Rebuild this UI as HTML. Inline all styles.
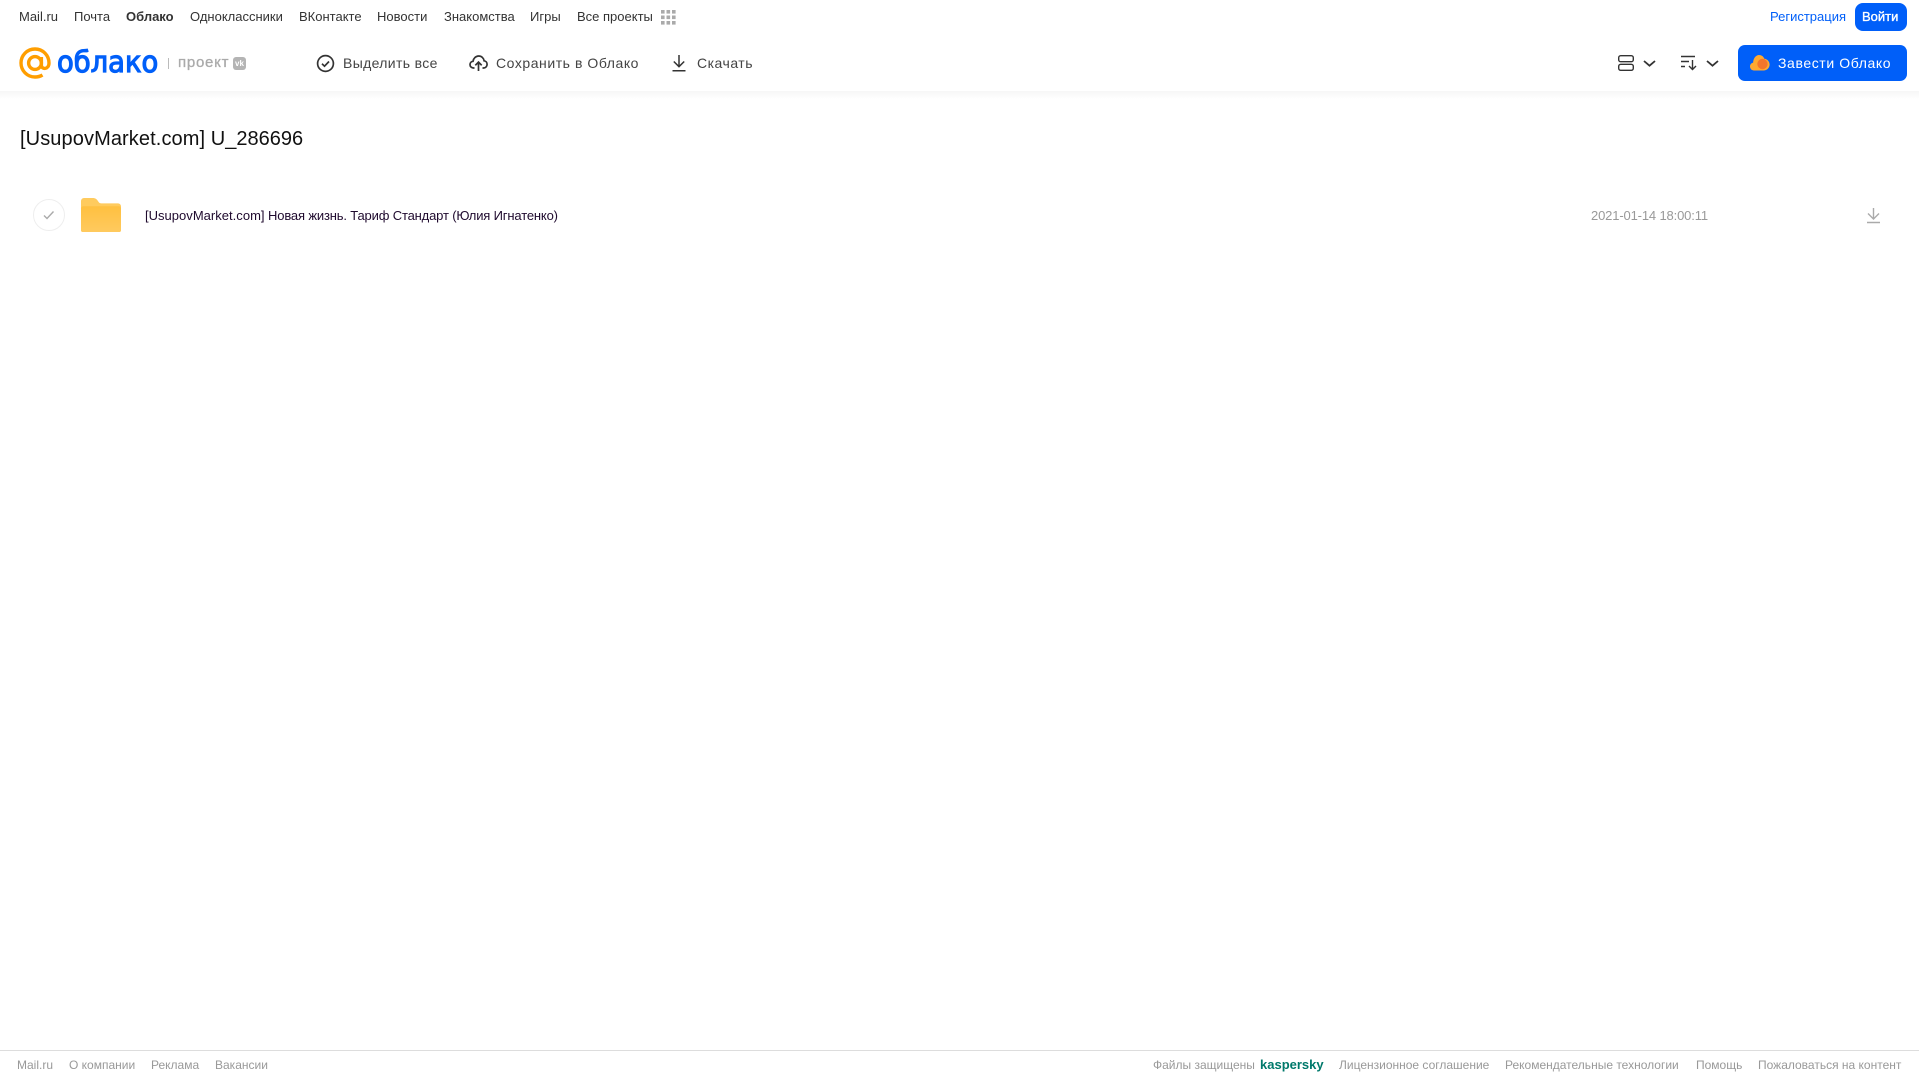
<!DOCTYPE html>
<html lang="ru"><head><meta charset="utf-8"><title>Облако</title>
<style>
html,body{margin:0;padding:0;background:#fff;width:1919px;height:1079px;overflow:hidden;font-family:"Liberation Sans",sans-serif}
.t{position:absolute;white-space:nowrap;line-height:18px}
.n{top:8px;font-size:13px;color:#333}
.b{top:54px;font-size:14px;color:#444;letter-spacing:.35px}
.f{top:1056px;font-size:12px;color:#999}
svg{position:absolute;overflow:visible}
</style></head><body>
<div style="position:absolute;left:0;top:91px;width:1919px;height:8px;background:linear-gradient(#f6f6f6,#fff)"></div>
<span class="t n" style="left:19px">Mail.ru</span>
<span class="t n" style="left:74px">Почта</span>
<span class="t n" style="left:126px;font-weight:bold">Облако</span>
<span class="t n" style="left:190px">Одноклассники</span>
<span class="t n" style="left:299px">ВКонтакте</span>
<span class="t n" style="left:377px">Новости</span>
<span class="t n" style="left:444px">Знакомства</span>
<span class="t n" style="left:530px">Игры</span>
<span class="t n" style="left:577px">Все проекты</span>
<svg style="left:661px;top:10px" width="15" height="15" fill="#aaa"><rect width="3.6" height="3.6"/><rect x="5.5" width="3.6" height="3.6"/><rect x="11" width="3.6" height="3.6"/><rect y="5.5" width="3.6" height="3.6"/><rect x="5.5" y="5.5" width="3.6" height="3.6"/><rect x="11" y="5.5" width="3.6" height="3.6"/><rect y="11" width="3.6" height="3.6"/><rect x="5.5" y="11" width="3.6" height="3.6"/><rect x="11" y="11" width="3.6" height="3.6"/></svg>
<span class="t n" style="left:1770px;color:#005ff9">Регистрация</span>
<div style="position:absolute;left:1855px;top:3px;width:52px;height:28px;background:#005ff9;border-radius:8px"></div>
<span class="t n" style="left:1862px;color:#fff;-webkit-text-stroke:.35px #fff">Войти</span>

<svg style="left:19px;top:47px" width="32" height="32" viewBox="0 0 32 32" fill="none" stroke="#ff9e00" stroke-width="3.4"><circle cx="16" cy="16" r="6.4"/><path d="M22.4 10v8.2c0 4.6 7.6 4.6 7.600-2.200C30 8.200 23.700 2 16 2S2 8.200 2 16s6.300 14 14 14c3 0 5.400-.7 7.500-2"/></svg>
<span class="t" style="left:57px;top:44px;line-height:36px;font-size:29px;color:#005ff9;-webkit-text-stroke:1.2px #005ff9;font-family:'DejaVu Sans',sans-serif;transform:scaleX(.945);transform-origin:left">облако</span>
<div style="position:absolute;left:168px;top:58px;width:1px;height:11px;background:#bbb"></div>
<span class="t" style="left:178px;top:54px;font-size:15px;color:#aaa;-webkit-text-stroke:.3px #aaa;letter-spacing:.75px">проект</span>
<div style="position:absolute;left:233px;top:57px;width:13px;height:13px;border-radius:3px;background:#b4b4b4"></div>
<span class="t" style="left:233px;top:57px;width:13px;text-align:center;line-height:13px;font-size:8px;font-weight:bold;color:#fff">vk</span>

<svg style="left:316px;top:54px" width="19" height="19" viewBox="0 0 19 19" fill="none" stroke="#333" stroke-width="1.7"><circle cx="9.500" cy="9.500" r="7.900"/><path d="M6 9.800l2.500 2.400 4.500-4.700"/></svg>
<span class="t b" style="left:343px;top:54px">Выделить все</span>
<svg style="left:469px;top:53px" width="19" height="19" viewBox="0 0 19 19" fill="none" stroke="#333" stroke-width="1.700"><path d="M5.500 15H4.500C2.500 15 1 13.500 1 11.600 1 9.800 2.300 8.500 4 8.300 4.500 5.300 6.800 3 9.700 3c2.800 0 5 2 5.400 4.800 1.700.2 3 1.600 3 3.500 0 2-1.500 3.700-3.600 3.700h-1"/><path d="M9.500 18V9.500M6.300 12.300l3.200-3.200 3.200 3.200"/></svg>
<span class="t b" style="left:496px;letter-spacing:.55px">Сохранить в Облако</span>
<svg style="left:671px;top:54px" width="16" height="18" viewBox="0 0 16 18" fill="none" stroke="#333" stroke-width="1.500"><path d="M8 1v11.500M2.800 7.500L8 12.700l5.200-5.200M1.500 16.800h13"/></svg>
<span class="t b" style="left:697px;letter-spacing:.5px">Скачать</span>

<svg style="left:1618px;top:55px" width="16" height="16" fill="none" stroke="#333" stroke-width="1.400"><rect x=".7" y=".7" width="14.600" height="6" rx="2"/><rect x=".7" y="9.300" width="14.600" height="6" rx="2"/></svg>
<svg style="left:1643px;top:60px" width="13" height="7" fill="none" stroke="#333" stroke-width="1.800"><path d="M1 1l5.500 4.700L12 1"/></svg>
<svg style="left:1681px;top:55px" width="17" height="16" fill="none" stroke="#333" stroke-width="1.400"><path d="M0 1.500h14M0 6.500h8M0 11.500h4"/><path d="M11.500 5v9.500M8 11l3.500 3.500L15 11"/></svg>
<svg style="left:1706px;top:60px" width="13" height="7" fill="none" stroke="#333" stroke-width="1.800"><path d="M1 1l5.500 4.700L12 1"/></svg>
<div style="position:absolute;left:1738px;top:45px;width:169px;height:36px;background:#005ff9;border-radius:7px"></div>
<svg style="left:1750px;top:54px" width="20" height="17" viewBox="0 0 20 17"><path d="M4 16.500C1.800 16.500 0 14.700 0 12.500c0-1.900 1.300-3.500 3.100-3.900C3.300 4.300 6 1 9 1c2.500 0 4.500 1.500 5.300 3.700 3 .2 5.300 2.800 5.300 5.800 0 3.300-2.700 6-6 6z" fill="#ffa930"/><circle cx="12.500" cy="10" r="5.200" fill="#f4762b"/></svg>
<span class="t b" style="left:1778px;color:#fff;letter-spacing:.6px">Завести Облако</span>

<span class="t" style="left:20px;top:126px;line-height:26px;font-size:20px;color:#111"><span style="letter-spacing:.1px">[UsupovMarket.com]</span> U_286696</span>

<div style="position:absolute;left:33px;top:199px;width:30px;height:30px;border:1px solid #eee;border-radius:50%"></div>
<svg style="left:43px;top:210px" width="12" height="10" fill="none" stroke="#aaa" stroke-width="1.400"><path d="M1 5.500l3 3 6.500-7"/></svg>
<svg style="left:81px;top:198px" width="40" height="34" viewBox="0 0 41 35" preserveAspectRatio="none"><defs><linearGradient id="g" x1="0" y1="0" x2="0" y2="1"><stop offset="0" stop-color="#ffc040"/><stop offset="1" stop-color="#ffca5f"/></linearGradient></defs><path d="M0 3a3 3 0 0 1 3-3h9c3 0 4 1 6 4 .7 1.200 1.500 1.500 3 1.500h17a3 3 0 0 1 3 3V33a2 2 0 0 1-2 2H2a2 2 0 0 1-2-2z" fill="#ffcb5e"/><path d="M0 11c0-1.500 1-2.500 2.500-2.500h36c1.500 0 2.500 1 2.500 2.500v22a2 2 0 0 1-2 2H2a2 2 0 0 1-2-2z" fill="url(#g)"/></svg>
<span class="t" style="left:145px;top:207px;font-size:13px;color:#1f0a2e;letter-spacing:-.16px"><span style="letter-spacing:.02px">[UsupovMarket.com]</span> Новая жизнь. Тариф Стандарт (Юлия Игнатенко)</span>
<span class="t" style="left:1591px;top:207px;font-size:13px;color:#999;letter-spacing:-.15px">2021-01-14 18:00:11</span>
<svg style="left:1866px;top:207px" width="15" height="17" viewBox="0 0 15 17" fill="none" stroke="#aaa" stroke-width="1.400"><path d="M7.500 1v10.500M2 6.500l5.500 5.500L13 6.500M1 15.500h13"/></svg>

<div style="position:absolute;left:0;top:1050px;width:1919px;height:1px;background:#ddd"></div>
<span class="t f" style="left:17px">Mail.ru</span>
<span class="t f" style="left:69px">О компании</span>
<span class="t f" style="left:151px">Реклама</span>
<span class="t f" style="left:215px">Вакансии</span>
<span class="t f" style="left:1153px">Файлы защищены</span>
<span class="t f" style="left:1260px;font-size:13px;font-weight:bold;color:#00796b">kaspersky</span>
<span class="t f" style="left:1339px">Лицензионное соглашение</span>
<span class="t f" style="left:1505px">Рекомендательные технологии</span>
<span class="t f" style="left:1696px">Помощь</span>
<span class="t f" style="left:1758px">Пожаловаться на контент</span>
</body></html>
